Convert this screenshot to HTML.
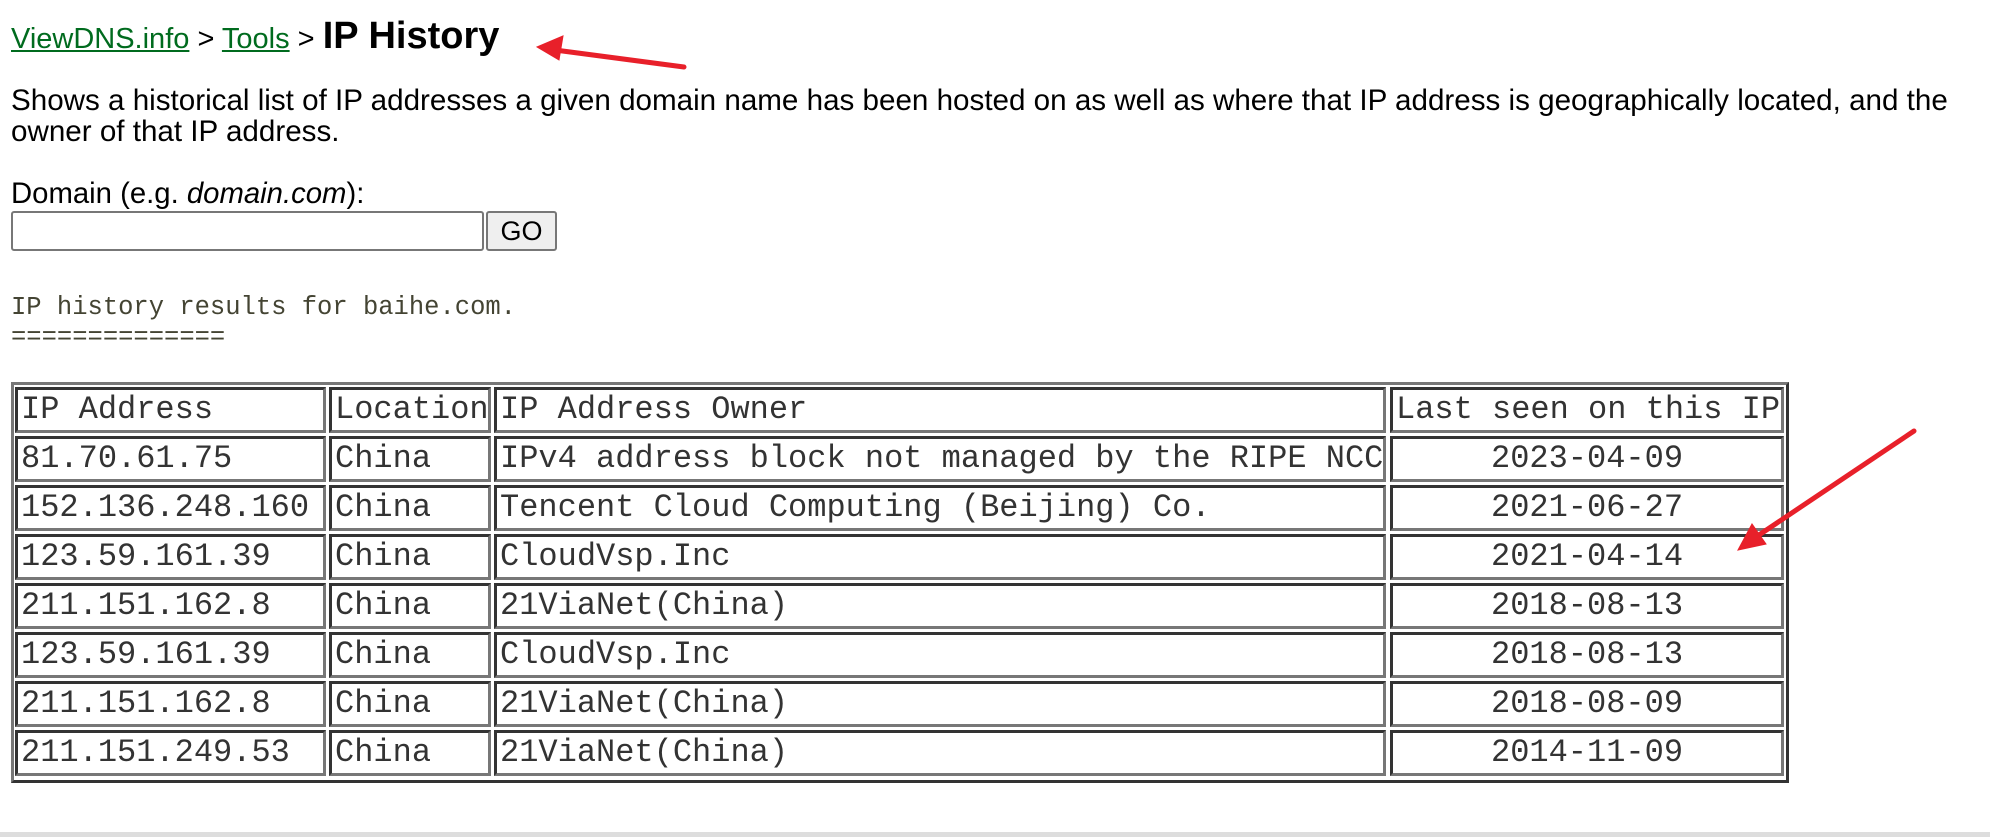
<!DOCTYPE html>
<html><head><meta charset="utf-8"><style>
html,body{margin:0;padding:0;background:#fff;width:1990px;height:837px;overflow:hidden;position:relative}
.a{position:absolute;white-space:nowrap}
.s{font-family:"Liberation Sans",sans-serif;color:#000}
a{color:#006b1e;text-decoration:underline}
.m{font-family:"Liberation Mono",monospace;color:#222}
.c{position:absolute;box-sizing:border-box;border:3px solid;border-color:#333 #777 #777 #333;height:46px;font-family:"Liberation Mono",monospace;font-size:32px;line-height:40px;padding-left:3px;color:#333;white-space:nowrap;overflow:hidden}
</style></head><body>
<div class="a s" style="left:11px;top:14px;font-size:29px;line-height:44px"><a>ViewDNS.info</a> &gt; <a>Tools</a> &gt; <b style="font-size:38px">IP History</b></div>
<div class="a s" style="left:11px;top:85px;font-size:29.6px;line-height:31px">Shows a historical list of IP addresses a given domain name has been hosted on as well as where that IP address is geographically located, and the<br>owner of that IP address.</div>
<div class="a s" style="left:11px;top:178px;font-size:29.3px;line-height:31px">Domain (e.g. <i>domain.com</i>):</div>
<div class="a" style="left:11px;top:211px;width:473px;height:40px;box-sizing:border-box;border:2px solid #777;border-radius:3px"></div>
<div class="a s" style="left:486px;top:211px;width:71px;height:40px;box-sizing:border-box;border:2px solid #777;border-radius:3px;background:#efefef;font-size:27px;line-height:36px;text-align:center">GO</div>
<div class="a m" style="left:11px;top:293px;font-size:25.5px;line-height:30px;color:#443">IP history results for baihe.com.<br>==============</div>
<div class="a" style="left:11px;top:382px;width:1778px;height:401px;box-sizing:border-box;border:3px solid;border-color:#777 #333 #333 #777"></div>
<div id="t"></div>
<svg class="a" style="left:0;top:0" width="1990" height="837"><g stroke="#e8202a" stroke-width="5" stroke-linecap="round" fill="#e8202a">
<line x1="684" y1="67" x2="555" y2="50"/><polygon points="537,47 563,36 559,60" stroke-width="1"/>
<line x1="1914" y1="431" x2="1756" y2="537"/><polygon points="1738,550 1752,524 1766,544" stroke-width="1"/></g></svg>
<div class="a" style="left:0;top:832px;width:1990px;height:5px;background:#ddd"></div>
<script>
var cols=[[15,311],[329,162],[494,892],[1390,394]];
var rows=[["IP Address","Location","IP Address Owner","Last seen on this IP"],
["81.70.61.75","China","IPv4 address block not managed by the RIPE NCC","2023-04-09"],
["152.136.248.160","China","Tencent Cloud Computing (Beijing) Co.","2021-06-27"],
["123.59.161.39","China","CloudVsp.Inc","2021-04-14"],
["211.151.162.8","China","21ViaNet(China)","2018-08-13"],
["123.59.161.39","China","CloudVsp.Inc","2018-08-13"],
["211.151.162.8","China","21ViaNet(China)","2018-08-09"],
["211.151.249.53","China","21ViaNet(China)","2014-11-09"]];
var h="";
rows.forEach(function(r,i){r.forEach(function(t,j){var st="left:"+cols[j][0]+"px;top:"+(387+i*49)+"px;width:"+cols[j][1]+"px;";if(j==3&&i>0)st+="text-align:center;padding-left:0;";h+='<div class="c" style="'+st+'">'+t+'</div>';});});
document.getElementById("t").innerHTML=h;
</script>
</body></html>
